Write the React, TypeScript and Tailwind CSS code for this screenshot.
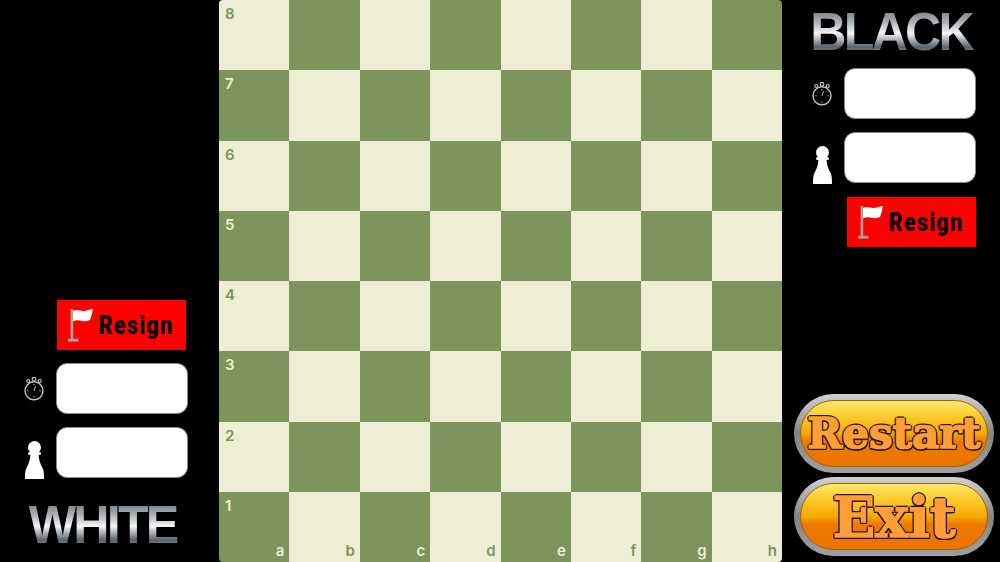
const files = ["a", "b", "c", "d", "e", "f", "g", "h"];
const ranks = [8, 7, 6, 5, 4, 3, 2, 1];

const Flag = () => (
  <svg width="25" height="34" viewBox="0 0 25 34" className="shrink-0">
    <rect x="2.600" y="1" width="2.600" height="31" fill="#a3a3a3" />
    <rect x="0" y="30.800" width="10.500" height="2.800" fill="#a3a3a3" />
    <path d="M5 3C9 .6 12 3.400 16 3c3.200-.3 6-1.800 8.800-2-.5 3.800-1.300 7.300-2.800 11-3.400 1.400-6.200 1.600-9 .8-2.800-.8-5-.8-8 .4z" fill="#fff" />
  </svg>
);

const Stopwatch = () => (
  <svg width="22" height="26" viewBox="0 0 22 26" fill="none" stroke="#c4c4c4" className="shrink-0">
    <circle cx="11" cy="14.800" r="9" strokeWidth="1.400" />
    <circle cx="11" cy="3.200" r="1.800" strokeWidth="1.200" />
    <circle cx="5.200" cy="5" r="1.500" strokeWidth="1.200" />
    <circle cx="16.800" cy="5" r="1.500" strokeWidth="1.200" />
    <path d="M11 14.800l1.500-4.500M11 8v1.400M11 20.200v1.400M4.200 14.800h1.400M16.400 14.800h1.400" strokeWidth="1" />
  </svg>
);

const Pawn = () => (
  <svg width="19" height="38" viewBox="0 0 19 38" fill="#fff" className="shrink-0 translate-y-[7px]">
    <circle cx="9.500" cy="6.500" r="6.500" />
    <rect x="3" y="11" width="13" height="3" rx="1.500" />
    <path d="M5.500 13h8c.2 5.500 1.600 9.500 3.800 13.500 1.300 2.400 1.700 4.500 1.700 11.500H0c0-7 .4-9.100 1.700-11.500C3.900 22.500 5.300 18.500 5.500 13z" />
  </svg>
);

const ResignButton = () => (
  <button className="flex h-[50px] w-[129px] items-center gap-[6px] bg-[#ff0000] pl-[11px] text-left font-['Roboto',sans-serif] text-[25px] leading-none font-black tracking-[1.5px] text-black">
    <Flag />
    <span className="inline-block origin-left scale-x-[0.86]">Resign</span>
  </button>
);

const StatBox = ({ icon }: { icon: React.ReactNode }) => (
  <div className="flex items-center">
    <div className="flex w-[44px] justify-center">{icon}</div>
    <div className="h-[51px] w-[132px] rounded-[11px] border border-[#8a8a8a] bg-white" />
  </div>
);

const Logo = ({ text }: { text: string }) => (
  <div className="-mx-[20px] flex h-[41px] w-[193px] items-center justify-center">
    <span className="inline-block translate-y-[1px] scale-x-[0.93] bg-[linear-gradient(180deg,#6f777d_0%,#aab0b4_30%,#f4f6f7_55%,#59626a_85%,#8d959b_100%)] bg-clip-text pr-[8px] pl-[4px] font-['Liberation_Sans',sans-serif] text-[54px] leading-[46px] font-bold tracking-[-3px] whitespace-nowrap text-transparent">
      {text}
    </span>
  </div>
);

const GameButton = ({ label, size }: { label: string; size: string }) => (
  <button className="flex h-[79px] w-[200px] items-center justify-center rounded-full bg-linear-to-b from-[#d2d2d2] via-[#858585] to-[#a0a0a0] p-[6px]">
    <span className="flex h-full w-full items-center justify-center rounded-full border border-[#a85f00] bg-[linear-gradient(180deg,#ffe96a_0%,#fbc92a_25%,#f5a800_50%,#ec7a00_62%,#ec7400_100%)]">
      <span
        className={`font-['DejaVu_Serif',serif] leading-none font-bold text-[#ff9e35] [-webkit-text-stroke:1.5px_#ff9e35] [text-shadow:-2px_0_#241405,2px_0_#241405,0_-2px_#241405,0_2px_#241405,-1.5px_-1.5px_#241405,1.5px_-1.5px_#241405,-1.5px_1.5px_#241405,1.5px_1.5px_#241405] ${size}`}
      >
        {label}
      </span>
    </span>
  </button>
);

export default function App() {
  return (
    <div className="flex h-[562px] w-[1000px] overflow-hidden bg-black">
      {/* white side */}
      <div className="flex w-[219px] flex-col items-end justify-end pr-[31px]">
        <div className="mr-[2px]">
          <ResignButton />
        </div>
        <div className="mt-[13px] flex flex-col gap-[13px]">
          <StatBox icon={<Stopwatch />} />
          <StatBox icon={<Pawn />} />
        </div>
        <div className="mt-[24px] mb-[19px] ml-[28px] self-start">
          <Logo text="WHITE" />
        </div>
      </div>

      {/* board */}
      <div className="grid h-[562px] w-[563px] grid-cols-8 grid-rows-8 overflow-hidden rounded-[4px] font-['Inter',sans-serif] text-[15px] leading-none font-semibold">
        {ranks.map((rank, r) =>
          files.map((file, f) => {
            const light = (r + f) % 2 === 0;
            return (
              <div
                key={file + rank}
                className={`relative ${light ? "bg-[#eeeed5] text-[#7d945d]" : "bg-[#7d945d] text-[#eeeed5]"}`}
              >
                {f === 0 && <span className="absolute top-[6px] left-[6px]">{rank}</span>}
                {r === 7 && <span className="absolute right-[5px] bottom-[4px]">{file}</span>}
              </div>
            );
          }),
        )}
      </div>

      {/* black side */}
      <div className="flex w-[218px] flex-col">
        <div className="mt-[9px] ml-[34px]">
          <Logo text="BLACK" />
        </div>
        <div className="mt-[18px] ml-[18px] flex flex-col gap-[13px]">
          <StatBox icon={<Stopwatch />} />
          <StatBox icon={<Pawn />} />
        </div>
        <div className="mt-[14px] ml-[65px]">
          <ResignButton />
        </div>
        <div className="mt-auto mb-[6px] ml-[12px] flex flex-col gap-[4px]">
          <GameButton label="Restart" size="text-[42px]" />
          <GameButton label="Exit" size="text-[56px]" />
        </div>
      </div>
    </div>
  );
}
